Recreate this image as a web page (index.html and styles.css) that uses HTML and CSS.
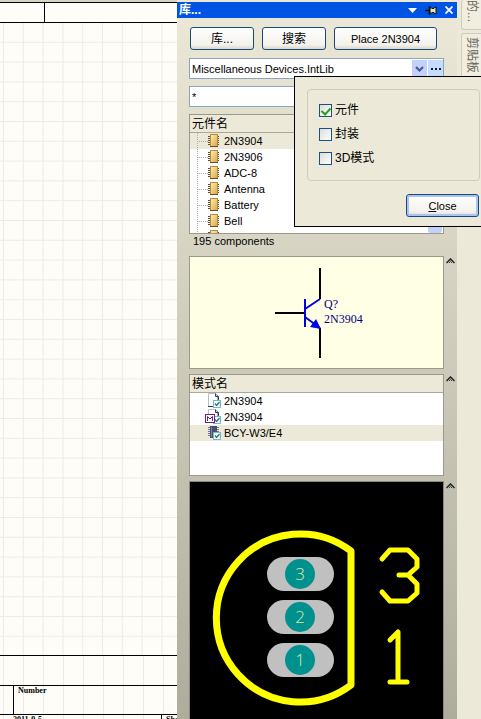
FILE: index.html
```
<!DOCTYPE html>
<html lang="zh-CN">
<head>
<meta charset="utf-8">
<meta name="viewport" content="width=device-width, initial-scale=1">
<title>库</title>
<link rel="stylesheet" href="styles.css">
</head>
<body>
<svg class="defs" aria-hidden="true">
  <defs>
    <linearGradient id="gold" x1="0" y1="0" x2="1" y2="1">
      <stop offset="0" stop-color="#fff0b8"/><stop offset="1" stop-color="#d9a443"/>
    </linearGradient>
    <symbol id="part" viewBox="0 0 13 14">
      <path d="M1 2.500h11M1 4.500h11M1 6.500h11M1 8.500h11M1 10.500h11" stroke="#6b4d1c"/>
      <rect x="3.500" y=".5" width="7" height="12" fill="url(#gold)" stroke="#b58a3c"/>
      <path d="M3 12.500h8" stroke="#6b4d1c"/>
    </symbol>
    <symbol id="tick" viewBox="0 0 8 8">
      <rect x=".5" y=".5" width="7" height="7" fill="#f4fcfc" stroke="#7fb3bd"/>
      <path d="M2 3.500l1.500 2L6.500 2" fill="none" stroke="#17808a" stroke-width="1.300"/>
    </symbol>
    <symbol id="page" viewBox="0 0 18 16">
      <path d="M3.500 .5h7l3 3v10h-10z" fill="#fff" stroke="#b9bdc9"/>
      <path d="M10.500 .5v3h3v4M3 13.500h6" fill="none" stroke="#34405c"/>
      <path d="M11 1l2.500 2.500V7h-1V4z" fill="#34405c"/>
      <use href="#tick" x="8" y="7" width="8" height="8"/>
    </symbol>
    <symbol id="page-m" viewBox="0 0 18 16">
      <use href="#page" width="18" height="16"/>
      <rect x=".5" y="5.500" width="9" height="8" fill="#fff" stroke="#7b1580"/>
      <path d="M2.500 12V7.500L5 10l2.500-2.500V12" fill="none" stroke="#7b1580"/>
    </symbol>
    <symbol id="chip" viewBox="0 0 18 16">
      <path d="M3 2.500h11M3 4.500h11M3 6.500h11M3 8.500h11M3 10.500h11" stroke="#6d7690"/>
      <rect x="5" y="1" width="7" height="12" fill="#465070"/>
      <path d="M6.500 2v10" stroke="#7984a2"/>
      <use href="#tick" x="8" y="7" width="8" height="8"/>
    </symbol>
    <symbol id="collapse" viewBox="0 0 9 6">
      <path d="M.5 5l4-4 4 4" fill="none" stroke="#222" stroke-width="1.500"/>
      <path d="M3 5l1.500-1.500L6 5" fill="none" stroke="#444"/>
    </symbol>
    <pattern id="grid" x="3" y="-1" width="19.800" height="19.800" patternUnits="userSpaceOnUse">
      <path d="M.5 0v20M0 .5h20" stroke="#ecebe6"/>
    </pattern>
  </defs>
</svg>

<div class="app">
  <main class="sheet">
    <div class="sheet-top"></div>
    <svg class="sheet-grid" aria-hidden="true"><rect width="100%" height="100%" fill="url(#grid)"/></svg>
    <div class="title-block">
      <div class="block-row"></div>
      <div class="block-row block-number"><span>Number</span></div>
      <div class="block-row block-date"><span>2011-9-5</span><span class="block-sheet">Sheet</span></div>
    </div>
  </main>

  <section class="panel" aria-label="库">
    <header class="titlebar">
      <h1>库...</h1>
      <button type="button" aria-label="菜单"><svg width="9" height="5"><path d="M0 0h9L4.500 5z" fill="#fff"/></svg></button>
      <button type="button" aria-label="固定"><svg width="12" height="9"><path d="M0 4.500h4M4.500 0v9" stroke="#111" stroke-width="1.500"/><path d="M5 2h2l1 1 1-1 2-1v7L9 7 8 6 7 7H5z" fill="#e9e7a5" stroke="#111"/></svg></button>
      <button type="button" aria-label="关闭"><svg width="8" height="8"><path d="M.5.5l7 7M7.500.5l-7 7" stroke="#fff" stroke-width="1.800"/></svg></button>
    </header>

    <div class="panel-body">
      <div class="toolbar">
        <button type="button" class="btn btn-cjk">库...</button>
        <button type="button" class="btn btn-cjk">搜索</button>
        <button type="button" class="btn btn-wide">Place 2N3904</button>
      </div>

      <div class="library">
        <select aria-label="元件库"><option>Miscellaneous Devices.IntLib</option></select>
        <svg class="drop" viewBox="0 0 15 17" aria-hidden="true"><rect width="15" height="17" rx="1" fill="#c3d0fa"/><path d="M4 7l3.500 3.500L11 7" fill="none" stroke="#45598c" stroke-width="2"/></svg>
        <button type="button" class="more" aria-label="更多"><svg width="10" height="2"><path d="M0 0h2v2H0zM4 0h2v2H4zM8 0h2v2H8z" fill="#10203c"/></svg></button>
      </div>

      <input class="filter" type="text" value="*" aria-label="过滤">

      <section class="list components">
        <h2>元件名</h2>
        <ul>
          <li class="selected"><svg class="part"><use href="#part"/></svg>2N3904</li>
          <li><svg class="part"><use href="#part"/></svg>2N3906</li>
          <li><svg class="part"><use href="#part"/></svg>ADC-8</li>
          <li><svg class="part"><use href="#part"/></svg>Antenna</li>
          <li><svg class="part"><use href="#part"/></svg>Battery</li>
          <li><svg class="part"><use href="#part"/></svg>Bell</li>
          <li><svg class="part"><use href="#part"/></svg>Bridge1</li>
        </ul>
        <span class="scroll-end"></span>
      </section>
      <p class="count">195 components</p>

      <div class="fold">
        <div class="symbol">
          <svg viewBox="0 0 253 111" role="img" aria-label="2N3904">
            <path d="M130 11v31M130 71v30M85 56h30" fill="none" stroke="#000" stroke-width="2"/>
            <path d="M115 42v28M115 52l15-10M115 60l15 11" fill="none" stroke="#0000e0" stroke-width="2"/>
            <path d="M131 72l-11-2 6-8z" fill="#0000e0"/>
            <text x="134" y="51">Q?</text>
            <text x="134" y="66">2N3904</text>
          </svg>
        </div>
        <button type="button" class="collapse" aria-label="折叠"><svg><use href="#collapse"/></svg></button>
      </div>

      <div class="fold">
        <section class="list models">
          <h2>模式名</h2>
          <ul>
            <li><svg class="model"><use href="#page"/></svg>2N3904</li>
            <li><svg class="model"><use href="#page-m"/></svg>2N3904</li>
            <li class="selected"><svg class="model"><use href="#chip"/></svg>BCY-W3/E4</li>
          </ul>
        </section>
        <button type="button" class="collapse" aria-label="折叠"><svg><use href="#collapse"/></svg></button>
      </div>

      <div class="fold fold-last">
        <div class="footprint">
          <svg viewBox="0 0 253 237" role="img" aria-label="BCY-W3/E4">
            <path d="M161 69A84 84 0 1 0 161 203Z" fill="none" stroke="#ff0" stroke-width="7" stroke-linejoin="round"/>
            <g fill="#c0c0c0"><rect x="77" y="75" width="67" height="34" rx="17"/><rect x="77" y="118" width="67" height="34" rx="17"/><rect x="77" y="161" width="67" height="34" rx="17"/></g>
            <g fill="#00908e"><circle cx="110" cy="92" r="15"/><circle cx="110" cy="135" r="15"/><circle cx="110" cy="178" r="15"/></g>
            <g class="pins"><text x="110" y="98">3</text><text x="110" y="141">2</text><text x="110" y="184">1</text></g>
            <g fill="none" stroke="#ff0" stroke-width="5" stroke-linecap="round" stroke-linejoin="round">
              <path d="M192 77l8-9h18l9 9v8l-9 8h-9M218 93l9 9v9l-9 8h-18l-8-9"/>
              <path d="M200 158l8-8v50M200 200h17"/>
            </g>
          </svg>
        </div>
        <button type="button" class="collapse" aria-label="折叠"><svg><use href="#collapse"/></svg></button>
      </div>
    </div>
  </section>

  <nav class="rail" aria-label="面板">
    <a href="#" class="rail-first">的...</a>
    <a href="#">剪贴板</a>
  </nav>

  <form class="popup">
    <fieldset>
      <label><input type="checkbox" checked>元件</label>
      <label><input type="checkbox">封装</label>
      <label><input type="checkbox">3D模式</label>
    </fieldset>
    <button type="button" class="btn close"><span><u>C</u>lose</span></button>
  </form>
</div>
</body>
</html>
```
FILE: styles.css
```
* { box-sizing: border-box; }

body {
  margin: 0;
  font: 11px/16px "Liberation Sans", "Noto Sans CJK SC", sans-serif;
  color: #000;
}

h1, h2, ul, p, fieldset { margin: 0; padding: 0; }
ul { list-style: none; }
button, input, select { font: inherit; color: inherit; }
.defs { position: absolute; width: 0; height: 0; }

.app {
  position: relative;
  display: grid;
  grid-template-columns: 1fr 280px 24px;
  height: 100vh;
  overflow: hidden;
  background: #ece9d8;
}

/* Schematic sheet */
.sheet {
  display: flex;
  flex-direction: column;
  min-width: 0;
  overflow: hidden;
  background: #fffdf7;
  border-top: 2px solid #d8d5c5;
}
.sheet-top {
  flex: none;
  height: 21px;
  border: solid #000;
  border-width: 1px 0;
  background: linear-gradient(#000, #000) 44px 0 / 1px 100% no-repeat;
}
.sheet-grid { flex: 1; width: 100%; min-height: 0; }
.title-block {
  flex: none;
  font: bold 8px/10px "Liberation Serif", serif;
  background:
    repeating-linear-gradient(90deg, transparent 0 3px, #ecebe6 3px 4px, transparent 4px 20px);
}
.block-row { height: 30px; border-top: 1px solid #000; }
.block-number { height: 29px; padding: 0 4px; display: flex; }
.block-number span { margin-left: 9px; padding: 0 4px; border-left: 1px solid #000; }
.block-date { height: 5px; display: flex; justify-content: space-between; padding-left: 13px; overflow: hidden; }
.block-sheet { width: 16px; padding-left: 4px; border-left: 1px solid #000; overflow: hidden; }

/* Library panel */
.panel {
  display: flex;
  flex-direction: column;
  min-height: 0;
  padding-top: 2px;
  background: linear-gradient(#ece9d8, #aeac9b);
}
.titlebar {
  display: flex;
  flex: none;
  align-items: center;
  gap: 8px;
  height: 16px;
  padding: 0 4px 0 2px;
  color: #fff;
  background: #0054e3;
}
.titlebar h1 { flex: 1; font-size: 12px; line-height: 16px; }
.titlebar button { display: flex; padding: 0; border: 0; background: none; }
.panel-body {
  display: flex;
  flex: 1;
  flex-direction: column;
  min-height: 0;
  padding: 9px 13px 0 12px;
}

.toolbar { display: flex; gap: 8px; margin: 0 7px 0 1px; }
.btn {
  width: 64px;
  height: 23px;
  padding: 0;
  border: 1px solid #1c4a78;
  border-radius: 3px;
  background: linear-gradient(#fff, #f3f2ec 80%, #dbd7cc);
}
.btn-cjk { font-size: 12px; }
.btn-wide { flex: 1; }

.library {
  position: relative;
  display: flex;
  height: 21px;
  margin-top: 8px;
  border: 1px solid #8ba5bd;
  background: #fff;
}
.library select {
  flex: 1;
  min-width: 0;
  padding: 0 2px;
  border: 0;
  background: none;
  appearance: none;
}
.drop { width: 15px; height: 17px; margin: 1px; }
.more {
  display: flex;
  align-items: center;
  justify-content: center;
  width: 15px;
  margin: 1px 0;
  padding: 0;
  border: 0;
  background: #c6dcff;
}
.filter {
  width: 100%;
  height: 21px;
  margin-top: 7px;
  padding: 0 2px;
  border: 1px solid #8ba5bd;
  border-radius: 0;
  background: #fff;
}

.list {
  overflow: hidden;
  border: 1px solid #9a998b;
  background: #fff;
}
.list h2 {
  height: 18px;
  padding-left: 2px;
  border-bottom: 1px solid #aaa899;
  background: #ece9d8;
  font-size: 12px;
  font-weight: normal;
  line-height: 18px;
}
.list li { display: flex; align-items: center; height: 16px; }
.selected { background: #ece9d8; }

.components { position: relative; flex: none; height: 120px; margin-top: 7px; }
.components li {
  padding-left: 17px;
  background-image:
    repeating-linear-gradient(#aaa 0 1px, transparent 1px 2px),
    repeating-linear-gradient(90deg, #aaa 0 1px, transparent 1px 2px);
  background-position: 7px 0, 7px 8px;
  background-size: 1px 100%, 11px 1px;
  background-repeat: no-repeat;
}
.part { width: 13px; height: 14px; margin-right: 4px; }
.scroll-end {
  position: absolute;
  right: 1px;
  bottom: 0;
  width: 14px;
  height: 8px;
  border-radius: 2px;
  background: #c3d0fa;
}
.count { height: 22px; padding-left: 4px; line-height: 14px; }

.fold { display: flex; flex: none; gap: 2px; margin-right: -12px; margin-bottom: 5px; }
.fold > :first-child { flex: 1; min-width: 0; }
.collapse { display: flex; width: 10px; height: 10px; margin-top: 2px; padding: 0; border: 0; background: none; }
.collapse svg { width: 9px; height: 6px; }
.symbol { border: 1px solid #9a998b; background: #ffffe6; }
.symbol svg, .footprint svg { display: block; width: 100%; }
.symbol text { font: 12px "Liberation Serif", serif; fill: #000080; }

.models { height: 102px; }
.models li { padding-left: 15px; }
.model { width: 18px; height: 16px; margin-right: 1px; }

.fold-last { flex: 1; min-height: 0; margin-bottom: 0; }
.footprint { overflow: hidden; border: 1px solid #8a897c; border-bottom: 0; background: #000; }
.pins text { font: 300 17px "Open Sans", sans-serif; text-anchor: middle; fill: #d8eea0; }

/* Docked tabs */
.rail { display: flex; flex-direction: column; gap: 3px; padding-left: 4px; }
.rail a {
  height: 64px;
  padding-top: 3px;
  border: 1px solid #d0ccba;
  border-right: 0;
  border-radius: 3px 0 0 3px;
  background: #f1eee0;
  color: #66645c;
  font-size: 12px;
  line-height: 18px;
  text-decoration: none;
  writing-mode: vertical-rl;
  text-orientation: sideways;
}
.rail .rail-first { height: 30px; padding-top: 0; border-top: 0; }

/* Search-scope popup */
.popup {
  position: absolute;
  top: 76px;
  right: 0;
  display: flex;
  flex-direction: column;
  align-items: flex-end;
  gap: 13px;
  width: 187px;
  padding: 12px 1px 9px 12px;
  border: 1px solid #000;
  border-right: 0;
  background: #ece9d8;
}
.popup fieldset {
  display: flex;
  flex-direction: column;
  gap: 8px;
  width: 100%;
  padding: 12px 11px 14px;
  border: 1px solid #d0ccba;
  border-radius: 4px;
}
.popup label { display: flex; align-items: center; gap: 3px; font-size: 12px; }
.popup input {
  width: 13px;
  height: 13px;
  margin: 0;
  border: 1px solid #1c5180;
  appearance: none;
  background: linear-gradient(135deg, #dcdcd7, #fff);
}
.popup input:checked::before {
  content: "";
  display: block;
  width: 4px;
  height: 7px;
  margin: 1px 0 0 3px;
  border: solid #21a121;
  border-width: 0 2px 2px 0;
  transform: rotate(42deg);
}
.close { width: 73px; margin-right: 1px; box-shadow: inset 0 0 0 2px #a9c3f5; }
```
